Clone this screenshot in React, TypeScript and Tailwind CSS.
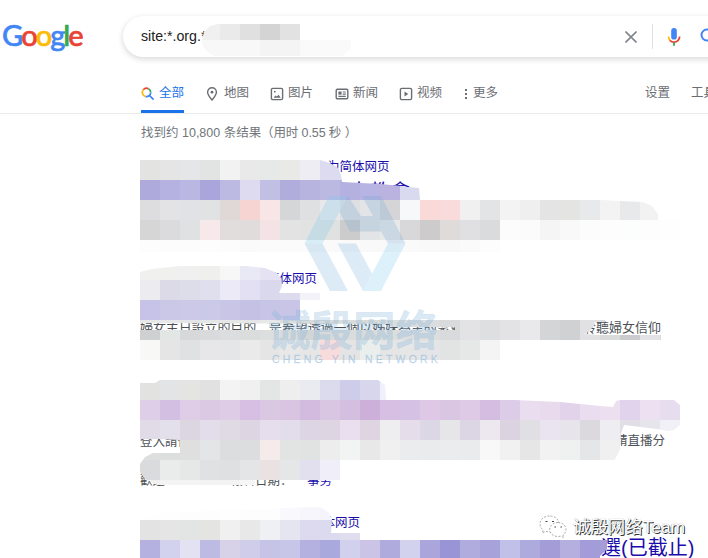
import React from "react";

type Row = { h: string; cells: string };

const firstRows: Row[] = [
  { h: "h-5", cells: "e3e3e1 e4e5e4 e5e6e8 e2e4e4 f2f2f2 e8e9e8 e7e8e8 e9e9e8 eeedf4 dddbf0 dddbf0" },
  { h: "h-5", cells: "aeaadc b5b2e2 bab7e2 aaa6dc bcb9e2 dedbf0 c2bfe5 b0addd b7b4e0 bbb8e2 b4b0e0 b7b3e3 bab3df d9d9ef" },
  { h: "h-5", cells: "dddddf e3e3e5 e1e2e6 e1e2e4 e0d7d7 f5d4d2 f8e6e6 d5d6d7 dfe0e1 e8e8ea dedfe2 e3e4e6 d5d5d7 f6f8fa fadad8 f9dbdc f0f0f0 e3e4e6 f3f3f3 efeff0 e4e4e4 e4e4e3 e8e9eb f3f3f4 e8e9eb f2f2f3" },
  { h: "h-5", cells: "d6d6d6 dbdbdd e0e1e3 f7e9e9 e1dddd e0dcdb f4e3e4 e3e3e3 e1e2e2 e0e1e1 cccccc e3e4e5 e8e9e9 d8d8da cdcbcb e0dbdb e0e0e2 dadbdc fcfcfc fbfbfb f5f5f5 f9f9f9 fcfcfc fdfdfd fbfefc fdfdfd fefefe" },
  { h: "h-3", cells: "fdfdfd fcfcfc fcfcfc fdfdfd fcfcfc fafafa fbfbfb fbfbfb fafbfa fafafa fafafa f9f9f9 f9f9f9 fafafa f8f9f8 f8f8f8 fafafa fdfdfd" },
];

const secondRows: Row[] = [
  { h: "h-5", cells: "f0f0ee f0f0ef f0f0f0 efefee f7f7f7 e9e8f5 e4e2f3 e4e2f3" },
  { h: "h-5", cells: "ebebf0 dbdae6 dddde9 e0dfed ebeaf6 e2e0f2 dad8ed dddbee f3f2f8" },
  { h: "h-5", cells: "c7c3e8 cac7e7 ccc9e8 cbc9e8 c9c5e7 c4c1e5 c7c5e6 c8c5e7" },
];

const secondTextRows: Row[] = [
  { h: "h-2.5", cells: "e7e8e8 e7e8e8 e4e5e7 e5e6e6 e5e6e6 e5e6e7 e7e8e8 dcdedd d8dad9 d9dbda dbdddc d9dbda dcdddd dcdddf dcdddf d9dadb e3e3e6 dedfe1 e3e3e5 e9e9eb d4d5d7 d0d1d3 e1e1e4 dadcdb" },
  { h: "h-2.5", cells: "cfd0d1 e2e6e4 d7d8da d9dadb dbddde dbdddd dddede d9dbda d2d5d6 d9dbda dbdddc d9dbda dcdddd dcdddf dcdddf d9dadb e3e3e6 dedfe1 e3e3e5 e9e9eb d4d5d7 d0d1d3 e1e1e4 dadcdb cbcbcf e3e3e6 dbdbdd" },
  { h: "h-5", cells: "f8f8f6 e4e5e4 e0e1e2 e7e7e9 e5e6e7 e9eae9 e5e5e5 e8e8e8 e6e6e6 f8dcdc e4e4e4 eaeeec e4e5e4 e6e6e6 e5e5e7 e2e3e3 e6e8e7 f4f4f4" },
];

const thirdRows: Row[] = [
  { h: "h-5", cells: "e2e2e0 e2e4e5 e4e4e3 e1e1e1 f3f3f3 f0f0f1 e4e5e5 efeeee eaebf0 dcdbed cdcce9 d7d6ed eef0fb" },
  { h: "h-5", cells: "dfcee7 d3bfe1 dfcce7 dbc8e3 decbe6 d6bfe2 dac8e3 d9c4e2 d3bbdf d9c6e3 d5bfe1 ccb0d9 d6bfe2 d4c1e4 dec8e5 d9c6e3 dec9e6 d5bce1 ddcce8 e9ddef e9dbed e2d3ea eaddf0 ecdff0 e1d3eb ede0f1 e6deee" },
  { h: "h-5", cells: "e1dbe7 e3dfeb dcd6e1 e3dcea e0dae5 ddd5e2 e6deec e3dcea ddd5e3 ddd6e2 e9dfee dfd5e2 eeedf0 e5ddea dcd7e4 e6e6e8 dcd6e4 ede8ef dbd3e0 e0dfe4 eae4f0 e8e4ec dbd8de eeeef2 e1dee6 e6e5eb f2f0f7" },
  { h: "h-5", cells: "dddede dddede dedfde e4e5e7 dcddde dcddde f5ebeb e2e4e3 e1e2e2 ecedec f2f4f4 e8e8e8 f0f0f0 ebeced e9ebec ebecee e9ebec f8f8f8 f1f1f1 e6e6e7 f2f2f3 eff0f0 e5e6e7 f0f0f0 f0f0f0" },
  { h: "h-5", cells: "dadbdc eaebeb e6e7e7 dfe1e3 dee0e1 e4e5e7 eae1e2 e4e6e7 e2e0ee f0eef9" },
  { h: "h-[5px]", cells: "f1f1f1 f4f4f4 f4f4f4 f3f3f3 f3f3f3 f6f6f6" },
];

const fourthRows: Row[] = [
  { h: "h-[13px]", cells: "fefefe fefefe fdfdfd fdfdfd fefefe fdfdfd fdfdfd f9f8fc f7f6fc f5f3fb" },
  { h: "h-5", cells: "e3e3e3 e4e5e4 e3e5e4 e4e4e3 f0f0f0 e7e8e7 eff0f3 e5e5f2 dddaef dcdaef e0deee" },
  { h: "h-5", cells: "b4b1e1 d2d1ee e3e2f2 bdbbe4 d7d2e8 d0cdea c5c4e7 c8c6e8 b4b1e0 a9a9dd d1d1ed cbc4e6 afabdc d3d2ee aaa5db 9994d5 b0acde a7a2da c0c0e8 adaade a39cd7 b4afdf a29cd8 a39dd8" },
];

function Mosaic({ rows, className }: { rows: Row[]; className: string }) {
  return (
    <div className={`absolute left-0 flex flex-col ${className}`}>
      {rows.map((row, r) => (
        <div key={r} className={`flex ${row.h}`}>
          {row.cells.split(" ").map((c, i) => (
            <span key={i} className="w-5 shrink-0" style={{ backgroundColor: `#${c}` }} />
          ))}
        </div>
      ))}
    </div>
  );
}

function Logo() {
  return (
    <div className="flex w-[120px] shrink-0 pl-0.5 pt-[17px] font-['Lato'] text-[29px] leading-9 font-medium tracking-[-2px] [-webkit-text-stroke:0.6px_currentColor]">
      <span className="text-[#4285f4]">G</span>
      <span className="text-[#ea4335]">o</span>
      <span className="text-[#fbbc05]">o</span>
      <span className="text-[#4285f4]">g</span>
      <span className="text-[#34a853]">l</span>
      <span className="text-[#ea4335]">e</span>
    </div>
  );
}

function SearchBar() {
  return (
    <div className="relative mt-4 flex h-[41px] w-[640px] shrink-0 items-center rounded-full bg-white pl-[18px] shadow-[0_2px_5px_1px_rgba(64,60,67,0.16)]">
      <span className="w-[481px] text-[14.200px] text-[#222]">site:*.org.*</span>
      <div className="absolute left-[78px] top-2 flex flex-col [clip-path:polygon(1px_16px,3px_8px,9px_2px,17px_0,99px_0,99px_16px,150px_16px,150px_24px,141px_32px,14px_32px,5px_27px,1px_20px)]">
        <div className="flex h-4">
          <span className="w-[19px] bg-[#f0f0f0]" />
          <span className="w-5 bg-[#eaeaea]" />
          <span className="w-5 bg-[#e0e0e0]" />
          <span className="w-5 bg-[#d4d4d4]" />
          <span className="w-5 bg-[#e2e2e3]" />
        </div>
        <div className="flex h-4">
          <span className="w-[59px] bg-[#f8f8f8]" />
          <span className="w-10 bg-[#f4f4f4]" />
          <span className="w-[51px] bg-[#fafafa]" />
        </div>
      </div>
      <svg className="ml-[3px] size-3 shrink-0 text-[#80868b]" viewBox="0 0 12 12" fill="none" stroke="currentColor" strokeWidth="1.6">
        <path d="M.5.5l11 11M11.5.5l-11 11" />
      </svg>
      <span className="ml-[15px] h-[25px] w-px shrink-0 bg-[#dfe1e5]" />
      <svg className="ml-[9px] size-6 shrink-0" viewBox="0 0 24 24">
        <rect x="9.2" y="3" width="5.6" height="11.6" rx="2.7" fill="#4285f4" />
        <path d="M6.6 11.5c0 1.7.6 3.1 1.6 4.2" fill="none" stroke="#fbbc05" strokeWidth="1.8" />
        <path d="M7.9 15.4c2.2 2.4 6 2.4 8.2 0 1-1.1 1.5-2.3 1.5-3.9" fill="none" stroke="#ea4335" strokeWidth="1.8" />
        <path d="M12 17.5v3.2" stroke="#34a853" strokeWidth="1.8" />
      </svg>
      <svg className="ml-[13px] size-5 shrink-0" viewBox="0 0 20 20" fill="none" stroke="#4285f4" strokeWidth="2">
        <circle cx="8" cy="8" r="5.5" />
        <path d="M12 12l5 5" />
      </svg>
    </div>
  );
}

const iconClass = "size-[14px] shrink-0";

function SearchIcon() {
  return (
    <svg className={iconClass} viewBox="0 0 14 14" fill="none" strokeWidth="1.7">
      <path d="M2.300 2.800A4.200 4.200 0 0 1 7.500 1.700" stroke="#ea4335" />
      <path d="M7.500 1.700A4.200 4.200 0 0 1 9.700 5.500" stroke="#34a853" />
      <path d="M2.300 2.800A4.200 4.200 0 0 0 4.600 9.600" stroke="#fbbc05" />
      <path d="M4.600 9.600A4.200 4.200 0 0 0 9.700 5.500M8.600 8.600l4 4.100" stroke="#4285f4" />
    </svg>
  );
}

function PinIcon() {
  return (
    <svg className={iconClass} viewBox="0 0 14 14" fill="none" stroke="currentColor" strokeWidth="1.4">
      <path d="M7 13C4.200 9.700 2.600 7.500 2.600 5.200a4.400 4.400 0 0 1 8.800 0C11.400 7.500 9.800 9.700 7 13z" />
      <circle cx="7" cy="5.200" r="1.400" fill="currentColor" stroke="none" />
    </svg>
  );
}

function ImageIcon() {
  return (
    <svg className={iconClass} viewBox="0 0 14 14" fill="none" stroke="currentColor" strokeWidth="1.4">
      <rect x="1.400" y="1.400" width="11.200" height="11.200" rx="1.400" />
      <path d="M3.500 10.800l2-2.400 1.400 1.200 1.700-1.800 2.200 3z" fill="currentColor" stroke="none" />
      <circle cx="4.800" cy="4.700" r=".9" fill="currentColor" stroke="none" />
    </svg>
  );
}

function NewsIcon() {
  return (
    <svg className={iconClass} viewBox="0 0 14 14" fill="none" stroke="currentColor" strokeWidth="1.4">
      <rect x="1.200" y="2.200" width="11.600" height="9.600" rx="1.200" />
      <path d="M3.400 4.500h3.200v3.200H3.400z" fill="currentColor" stroke="none" />
      <path d="M7.800 5h3M7.800 7.200h3M3.400 9.400h7.400" strokeWidth="1.200" />
    </svg>
  );
}

function VideoIcon() {
  return (
    <svg className={iconClass} viewBox="0 0 14 14" fill="none" stroke="currentColor" strokeWidth="1.4">
      <rect x="1.400" y="1.400" width="11.200" height="11.200" rx="1.400" />
      <path d="M5.500 4.500v5l3.800-2.500z" fill="currentColor" stroke="none" />
    </svg>
  );
}

function DotsIcon() {
  return (
    <svg className="h-[14px] w-1 shrink-0" viewBox="0 0 4 14" fill="currentColor">
      <rect x="1" y="2" width="2" height="2" />
      <rect x="1" y="6" width="2" height="2" />
      <rect x="1" y="10" width="2" height="2" />
    </svg>
  );
}

function Tabs() {
  return (
    <nav className="flex h-[41px] items-stretch border-b border-[#ebebeb] pl-[141px] text-[12.500px] whitespace-nowrap text-[#6a6d72]">
      <div className="flex w-[43px] shrink-0 items-center gap-1 border-b-[3px] border-[#1a73e8] pt-1 text-[#1a73e8]"><SearchIcon /><span>全部</span></div>
      <div className="ml-[21px] flex items-center gap-[5px] pt-px"><PinIcon /><span>地图</span></div>
      <div className="ml-[21px] flex items-center gap-1 pt-px"><ImageIcon /><span>图片</span></div>
      <div className="ml-[22px] flex items-center gap-1 pt-px"><NewsIcon /><span>新闻</span></div>
      <div className="ml-[21px] flex items-center gap-1 pt-px"><VideoIcon /><span>视频</span></div>
      <div className="ml-[22px] flex items-center gap-[5px] pt-px"><DotsIcon /><span>更多</span></div>
      <div className="ml-[147px] flex items-center pt-px">设置</div>
      <div className="ml-[21px] flex items-center pt-px">工具</div>
    </nav>
  );
}

function Watermark() {
  return (
    <div className="pointer-events-none absolute left-[268px] top-[195px] flex w-[174px] flex-col items-center">
      <svg className="-ml-px h-[97px] w-[102px]" viewBox="0 0 102 97">
        <g fillOpacity=".27">
          <path d="M.5 48.500L25 1h19L18.500 48.500z" fill="#7fcdee" />
          <path d="M.5 48.500h18L44 96H26z" fill="#7fb4dc" />
          <path d="M44 1l13 20h12L58 1h19l24.500 47.500H84L77 36.500H46L35.500 17z" fill="#7aa9d2" />
          <path d="M33.500 48.500H52l16 30L59 96z" fill="#7fb4dc" />
          <path d="M84 48.500h17.500L77 96H59z" fill="#7fcdee" />
        </g>
      </svg>
      <div className="mt-[17px] -ml-1 h-[45px] text-[42.500px] leading-[46px] font-bold whitespace-nowrap text-[#7fb4dc]/30 [-webkit-text-stroke:0.6px_rgba(127,180,220,0.2)]">诚殷网络</div>
      <div className="-mt-px h-3 pl-[3px] font-['Liberation_Sans'] text-[10.500px] leading-3 font-medium tracking-[3.200px] whitespace-nowrap text-[#7fb4dc]/45 [-webkit-text-stroke:0.3px_currentColor]">CHENG YIN NETWORK</div>
    </div>
  );
}

function AccountBadge() {
  return (
    <div className="absolute left-[539px] top-[513px] flex items-center gap-1.5">
      <svg className="h-7 w-7" viewBox="0 0 28 28" fill="#fff" stroke="#888" strokeWidth=".7" strokeDasharray="2 1.500">
        <path d="M10.500 3C5 3 1 6.500 1 11c0 2.600 1.300 4.500 3.200 6l-.9 3 3.500-1.700c1.200.4 2.400.6 3.700.6 5.500 0 9.500-3.500 9.500-8S16 3 10.500 3z" />
        <path d="M19 9.500c-4.700 0-8.300 3-8.300 7s3.600 7 8.300 7c1 0 2-.2 2.900-.4l2.800 1.600-.7-2.600c1.800-1.300 3-3.200 3-5.600 0-4-3.500-7-8-7z" />
        <path d="M6.500 8.500h2M13 8.500h2M15.500 14h1.500M21.500 14h1.500" stroke="#444" strokeWidth="1.200" strokeDasharray="none" />
      </svg>
      <span className="text-[17.400px] leading-7 whitespace-nowrap text-white [text-shadow:1px_1px_0_#333,0_0_1px_#777]">诚殷网络Team</span>
    </div>
  );
}

export default function App() {
  return (
    <div className="relative h-[558px] w-[708px] overflow-hidden bg-white font-['Liberation_Sans','Noto_Sans_CJK_SC',sans-serif]">
      <header>
        <div className="flex h-[73px] gap-[3px]">
          <Logo />
          <SearchBar />
        </div>
        <Tabs />
      </header>
      <main className="pl-[140px] text-[12.500px] whitespace-nowrap text-[#4d5156]">
        <p className="flex h-[46px] pt-[11px] pl-px text-[12.500px] leading-4 text-[#70757a]">
          <span className="w-[120px]">找到约 10,800 条结果</span>
          <span className="tracking-[-0.100px]">（用时 0.55 秒 ）</span>
        </p>
        <article className="relative h-[100px]">
          <p className="h-5 pl-[187px] leading-[14px] text-[#1a0dab]">为简体网页</p>
          <h3 className="h-7 pl-[210px] pt-px text-[20px] leading-[22px] text-[#1a0dab]">女教會</h3>
          <Mosaic rows={firstRows} className="top-0 [clip-path:polygon(0_0,180px_0,190px_3px,198px_8px,201px_15px,202px_22px,240px_24px,262px_26px,268px_27px,279px_28px,280px_40px,460px_40px,480px_41px,503px_42px,512px_46px,518px_54px,518px_60px,540px_60px,540px_92px,0_92px)]" />
        </article>
        <article className="relative h-[120px]">
          <p className="h-[61px] pl-[127px] pt-3 leading-[14px] text-[#1a0dab]">简体网页</p>
          <div className="flex h-[15px] w-[521px] justify-between text-[13px] leading-[14px]">
            <span className="tracking-[-0.100px]">婦女主日設立的目的，是希望透過一個以姊妹為主的聚會</span>
            <span>聆聽婦女信仰</span>
          </div>
          <Mosaic rows={secondRows} className="top-0 [clip-path:polygon(0_12px,12px_9px,40px_6px,105px_6px,125px_8px,137px_13px,141px_18px,142px_26px,139px_33px,180px_33px,180px_40px,160px_40px,160px_60px,0_60px)]" />
          <Mosaic rows={secondTextRows} className="top-[60px] [clip-path:polygon(0_0,465px_0,465px_2px,455px_2px,453px_7px,448px_12px,444px_14px,460px_15px,521px_15px,521px_20px,360px_20px,360px_40px,0_40px,0_10px,315px_10px,315px_7px,252px_7px,250px_4px,0_3px)]" />
        </article>
        <article className="relative h-[127px]">
          <p className="h-[54px] pl-[198px] pt-[3px] leading-[14px] text-[#1a0dab]">体网页</p>
          <div className="flex h-10 w-[525px] justify-between leading-[14px]">
            <span className="pt-px">登入請使</span>
            <span>請直播分</span>
          </div>
          <p className="flex h-[14px] leading-[14px]">
            <span className="w-[90px]">歡迎</span>
            <span className="w-[77px]">報名日期：</span>
            <span className="text-[#1a0dab]">事务</span>
          </p>
          <Mosaic rows={thirdRows} className="top-0 [clip-path:polygon(0_3px,15px_3px,20px_0,238px_0,245px_5px,246px_20px,375px_20px,420px_22px,460px_26px,473px_27px,476px_21px,480px_20px,534px_20px,540px_25px,540px_45px,534px_50px,528px_51px,517px_49px,484px_45px,481px_54px,480px_70px,473px_83px,465px_87px,457px_88px,430px_87px,428px_80px,200px_80px,200px_100px,115px_100px,115px_105px,17px_105px,5px_99px,0_92px,0_84px,5px_77px,13px_73px,40px_73px,40px_60px,18px_59px,0_59px)]" />
        </article>
        <article className="relative h-[60px]">
          <p className="h-[29px] pl-[170px] pt-[9px] leading-[14px] text-[#1a0dab]">简体网页</p>
          <h3 className="pl-[461px] text-[20px] leading-6 text-[#1a0dab]">選(已截止)</h3>
          <Mosaic rows={fourthRows} className="top-0 [clip-path:polygon(0_13px,20px_6px,100px_3px,170px_0,180px_0,188px_5px,192px_12px,191px_26px,220px_26px,220px_33px,467px_33px,467px_42px,460px_49px,460px_51px,0_51px)]" />
        </article>
      </main>
      <Watermark />
      <AccountBadge />
    </div>
  );
}
